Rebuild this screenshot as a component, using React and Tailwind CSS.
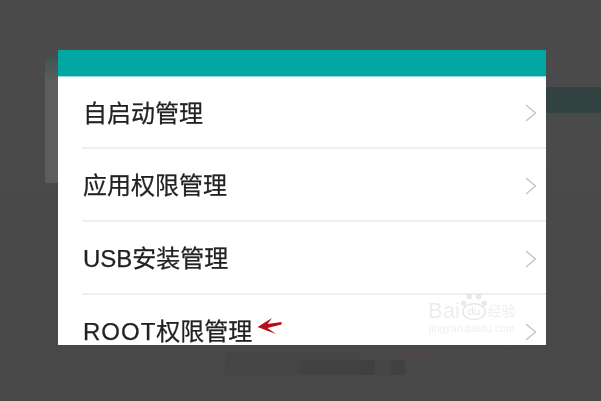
const font = { fontFamily: '"Liberation Sans", "Noto Sans CJK SC", sans-serif' };

function Chevron({ className = "" }) {
  return (
    <svg width="12" height="18" viewBox="0 0 12 18" fill="none" className={className}>
      <path d="M1 1 L10.5 9 L1 17" stroke="#c6c6c6" strokeWidth="1.5" />
    </svg>
  );
}

function Row({ label, h, divider, extra, chevronClass = "", textClass = "" }) {
  return (
    <div className={`relative flex items-center shrink-0 pl-[25px] pr-[9px] ${h}`}>
      <span className={`flex items-center text-[24px] leading-none text-[#222] blur-[0.4px] whitespace-nowrap [-webkit-text-stroke:0.25px_#222] ${textClass}`} style={font}>
        {label}
      </span>
      {extra}
      <Chevron className={`ml-auto ${chevronClass}`} />
      {divider && <div className="absolute left-[24px] right-0 bottom-0 h-[2px] bg-[#efefef]" />}
    </div>
  );
}

export default function App() {
  return (
    <div className="relative w-[601px] h-[401px] overflow-hidden bg-gradient-to-b from-[#4b4b4b] to-[#484848] pt-[50px] pl-[58px]">
      {/* sliver of the window behind, left */}
      <div className="absolute left-[45px] top-[58px] w-[15px] h-[125px] bg-gradient-to-b from-[#3c5655] via-[#5e5e5e] via-[20%] to-[#5c5e5d] rounded-tl-[6px] rounded-bl-[2px]" />
      {/* teal band behind, right */}
      <div className="absolute left-[546px] right-0 top-[87px] h-[26px] bg-[#324342]" />
      {/* pixelated remnants below */}
      <div className="absolute left-[225px] top-[352px] w-[135px] h-[23px] bg-[#464545]" />
      <div className="absolute left-[300px] top-[360px] w-[60px] h-[15px] bg-[#434242]" />
      <div className="absolute left-[360px] top-[360px] w-[15px] h-[15px] bg-[#414040]" />
      <div className="absolute left-[375px] top-[360px] w-[15px] h-[15px] bg-[#474646]" />
      <div className="absolute left-[390px] top-[360px] w-[15px] h-[15px] bg-[#424141]" />
      <div className="absolute left-[405px] top-[350px] w-[30px] h-[10px] bg-[#4e4646]" />

      <div className="relative flex flex-col w-[488px] h-[295px] overflow-hidden bg-white">
        <div className="h-[27px] shrink-0 bg-[#02a7a4] border-b border-[#8fdcdb]" />
        <Row label="自启动管理" h="h-[72px]" divider textClass="translate-y-[1px]" />
        <Row label="应用权限管理" h="h-[73px]" divider />
        <Row label="USB安装管理" h="h-[73px]" divider />
        <Row
          label={<><span className="tracking-[1px]">ROOT</span>权限管理</>}
          h="h-[73px]"
          extra={
            <svg width="25" height="18" viewBox="0 0 25 18" className="ml-[5px] -translate-y-[6px]">
              <path d="M0.5 10 L15 1 L10.5 7 L24.5 5 L24.5 7.5 L10.5 11 L19 17 Z" fill="#b3101c" />
            </svg>
          }
        />
        {/* watermark */}
        <div className="absolute left-[370px] top-[241px] flex flex-col items-center opacity-20 blur-[0.5px] text-[#a8a8a8]" style={font}>
          <div className="flex items-center h-[31px]">
            <span className="text-[22px] leading-none translate-y-[4px]">Bai</span>
            <svg width="28" height="31" viewBox="0 0 30 31">
              <ellipse cx="15" cy="21" rx="12" ry="8.5" fill="none" stroke="#888" strokeWidth="1.6" />
              <circle cx="4" cy="12" r="3" fill="#999" />
              <circle cx="10" cy="5" r="3" fill="#999" />
              <circle cx="20" cy="5" r="3" fill="#999" />
              <circle cx="26" cy="12" r="3" fill="#999" />
              <text x="15" y="25" textAnchor="middle" fontSize="12" fill="#888">du</text>
            </svg>
            <span className="text-[14px] leading-none translate-y-[4px]">经验</span>
          </div>
          <span className="text-[10px] leading-[13px] tracking-[0.3px]">jingyan.baidu.com</span>
        </div>
      </div>
    </div>
  );
}
